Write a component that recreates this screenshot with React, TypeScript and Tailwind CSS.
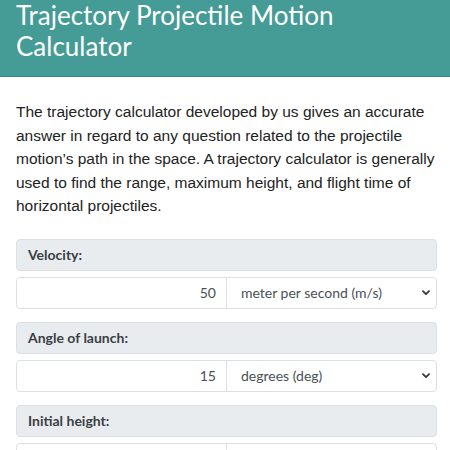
import React from "react";

const Chevron = () => (
  <svg width="8" height="6" viewBox="0 0 8 6" className="shrink-0">
    <path d="M1 1.2l3 3 3-3" fill="none" stroke="#343a40" strokeWidth="1.8" strokeLinecap="round" strokeLinejoin="round" />
  </svg>
);

const Group = ({ label, value, unit }: { label: string; value: string; unit: string }) => (
  <div className="flex flex-col gap-[6px]">
    <div className="h-[32px] flex items-center px-[11px] bg-[#e9ecef] border border-[#dcdfe3] rounded-[4px] text-[14px] font-bold text-[#3a3f44] [font-family:Lato,sans-serif]">
      {label}
    </div>
    <div className="h-[32px] flex border border-[#dcdfe3] rounded-[4px] bg-white [font-family:Lato,sans-serif] text-[14px]">
      <div className="w-[210px] flex items-center justify-end pr-[10px] text-[#495057] border-r border-[#dcdfe3]">{value}</div>
      <div className="flex-1 flex items-center justify-between pl-[14px] pr-[6px] text-[#495057]">
        <span>{unit}</span>
        <Chevron />
      </div>
    </div>
  </div>
);

export default function App() {
  return (
    <div className="w-[450px] h-[450px] overflow-hidden bg-white">
      <div className="bg-[#459b95] border-b border-[#3c8883] px-[16px] pb-[14px] h-[77px]">
        <h1 className="text-[26px] leading-[31px] text-white [font-family:Lato,sans-serif] font-normal">
          Trajectory Projectile Motion Calculator
        </h1>
      </div>
      <div className="px-[16px] pt-[23px]">
        <p className="w-[421px] text-[15.5px] leading-[23.5px] text-[#222] [font-family:'Liberation_Sans',Arial,sans-serif]">
          The trajectory calculator developed by us gives an accurate answer in regard to any question related to the projectile motion’s path in the space. A trajectory calculator is generally used to find the range, maximum height, and flight time of horizontal projectiles.
        </p>
        <div className="mt-[21px] flex flex-col gap-[13px] w-[421px]">
          <Group label="Velocity:" value="50" unit="meter per second (m/s)" />
          <Group label="Angle of launch:" value="15" unit="degrees (deg)" />
          <Group label="Initial height:" value="0" unit="meters (m)" />
        </div>
      </div>
    </div>
  );
}
